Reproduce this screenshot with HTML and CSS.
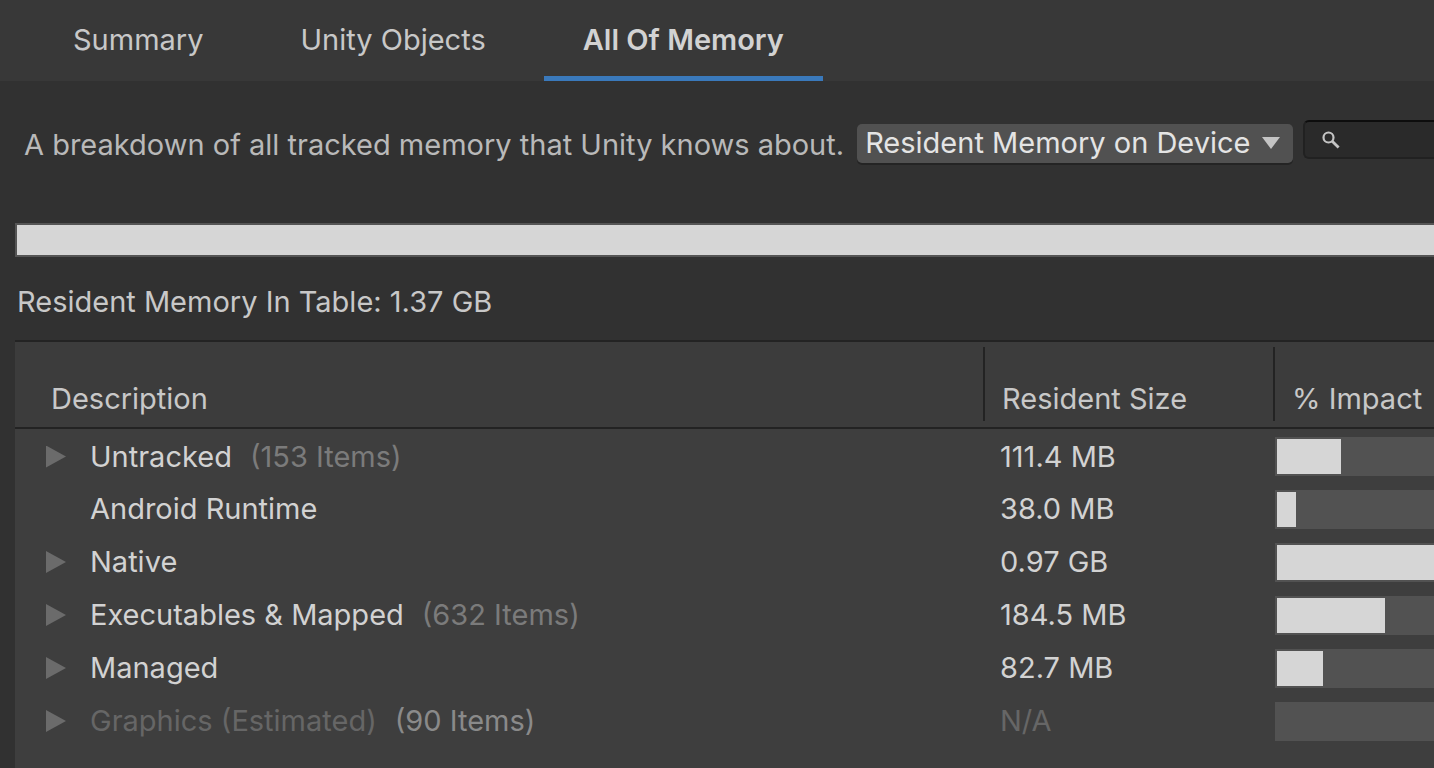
FILE: index.html
```html
<!DOCTYPE html>
<html lang="en">
<head>
    <meta charset="UTF-8">
    <meta name="viewport" content="width=device-width, initial-scale=1.0">
    <title>Memory Profiler</title>
    <link rel="stylesheet" href="styles.css">
</head>
<body>
    <nav class="tabs">
        <button class="tab">Summary</button>
        <button class="tab">Unity Objects</button>
        <button class="tab active">All Of Memory</button>
    </nav>
    <main class="content">
        <div class="toolbar">
            <label class="description" for="view">A breakdown of all tracked memory that Unity knows about.</label>
            <div class="dropdown">
                <select id="view">
                    <option>Resident Memory on Device</option>
                </select>
                <svg class="arrow" width="18" height="12" viewBox="0 0 18 12"><path d="M0 0H18L9 12Z" fill="#c4c4c4"/></svg>
            </div>
            <label class="search">
                <svg width="18" height="18" viewBox="0 0 18 18" fill="none" stroke="#c4c4c4"><circle cx="6.5" cy="6.5" r="5" stroke-width="2.2"/><path d="M10.2 10.2L16.6 16.6" stroke-width="2.8"/></svg>
                <input type="search" aria-label="Search">
            </label>
        </div>
        <div class="total-bar"><div class="fill"></div></div>
        <p class="total">Resident Memory In Table: 1.37 GB</p>
        <table class="memory">
            <colgroup>
                <col>
                <col class="col-size">
                <col class="col-impact">
            </colgroup>
            <thead>
                <tr>
                    <th><div class="heading first">Description</div></th>
                    <th><div class="heading">Resident Size</div></th>
                    <th><div class="heading">% Impact</div></th>
                </tr>
            </thead>
            <tbody>
                <tr>
                    <td><div class="name"><button class="toggle" aria-label="Expand Untracked"></button><span>Untracked</span><span class="count">(153 Items)</span></div></td>
                    <td class="size">111.4 MB</td>
                    <td><div class="bar"><div class="fill" style="width: 41%"></div></div></td>
                </tr>
                <tr>
                    <td><div class="name leaf"><span>Android Runtime</span></div></td>
                    <td class="size">38.0 MB</td>
                    <td><div class="bar"><div class="fill" style="width: 12%"></div></div></td>
                </tr>
                <tr>
                    <td><div class="name"><button class="toggle" aria-label="Expand Native"></button><span>Native</span></div></td>
                    <td class="size">0.97 GB</td>
                    <td><div class="bar"><div class="fill" style="width: 100%"></div></div></td>
                </tr>
                <tr>
                    <td><div class="name"><button class="toggle" aria-label="Expand Executables &amp; Mapped"></button><span>Executables &amp; Mapped</span><span class="count">(632 Items)</span></div></td>
                    <td class="size">184.5 MB</td>
                    <td><div class="bar"><div class="fill" style="width: 69%"></div></div></td>
                </tr>
                <tr>
                    <td><div class="name"><button class="toggle" aria-label="Expand Managed"></button><span>Managed</span></div></td>
                    <td class="size">82.7 MB</td>
                    <td><div class="bar"><div class="fill" style="width: 29%"></div></div></td>
                </tr>
                <tr class="estimated">
                    <td><div class="name"><button class="toggle" aria-label="Expand Graphics"></button><span>Graphics (Estimated)</span><span class="count">(90 Items)</span></div></td>
                    <td class="size">N/A</td>
                    <td><div class="bar"></div></td>
                </tr>
            </tbody>
        </table>
    </main>
</body>
</html>
```

FILE: styles.css
```css
* {
    box-sizing: border-box;
}
body {
    margin: 0;
    min-height: 100vh;
    display: flex;
    flex-direction: column;
    background: #313131;
    color: #c8c8c8;
    font-family: Inter, sans-serif;
    font-size: 29px;
    font-optical-sizing: none;
    line-height: 36px;
}
button, select, input {
    margin: 0;
    border: none;
    background: none;
    color: inherit;
    font: inherit;
    font-optical-sizing: none;
}
.tabs {
    display: flex;
    gap: 19px;
    padding-left: 34px;
    background: #383838;
}
.tab {
    padding: 22px 39px 18px;
    border-bottom: 5px solid transparent;
    cursor: pointer;
}
.tab.active {
    border-bottom-color: #3a79bb;
    color: #d2d2d2;
    font-weight: 600;
}
.content {
    flex: 1;
    display: flex;
    flex-direction: column;
    padding-left: 15px;
}
.toolbar {
    display: flex;
    align-items: flex-start;
    padding: 39px 0 60px 9px;
}
.description {
    flex: none;
    padding: 7px 13px 0 0;
    color: #b9b9b9;
}
.dropdown {
    position: relative;
    flex: none;
    padding-top: 4px;
    margin-right: 10px;
}
.dropdown select {
    display: block;
    height: 39px;
    padding: 0 42px 2px 8px;
    border-radius: 5px;
    background: #515151;
    box-shadow: 0 2px 0 #242424;
    color: #e4e4e4;
    appearance: none;
}
.arrow {
    position: absolute;
    top: 17px;
    right: 13px;
    pointer-events: none;
}
.search {
    flex: 1;
    min-width: 0;
    height: 39px;
    display: flex;
    align-items: center;
    gap: 8px;
    padding-left: 17px;
    border: 2px solid #212121;
    border-top-color: #0d0d0d;
    border-right: none;
    border-radius: 6px 0 0 6px;
    background: #2a2a2a;
}
.search svg {
    flex: none;
}
.search input {
    flex: 1;
    min-width: 0;
    padding: 0;
    outline: none;
}
.total-bar {
    height: 34px;
    padding: 2px 0 2px 2px;
    background: #555555;
}
.fill {
    height: 100%;
    background: #d6d6d6;
}
.total {
    margin: 0;
    padding: 27px 0 20px 2px;
}
.memory {
    width: 100%;
    border-collapse: collapse;
    table-layout: fixed;
    background: #3e3e3e;
}
.col-size {
    width: 290px;
}
.col-impact {
    width: 161px;
}
.memory thead {
    background: #3c3c3c;
    border-top: 2px solid #232323;
    border-bottom: 2px solid #232323;
}
.memory th, .memory td {
    padding: 0;
    text-align: left;
    font-weight: 400;
    white-space: nowrap;
}
.memory th {
    padding: 5px 0 6px;
}
.memory td {
    padding-top: 3px;
}
.heading {
    padding: 34px 0 4px 17px;
    border-left: 2px solid #232323;
}
.heading.first {
    padding-left: 34px;
    border-left-color: transparent;
}
.memory tbody tr {
    height: 53px;
}
/* keeps the table background down to the bottom of the window */
.content::after {
    content: "";
    flex: 1;
    background: #3e3e3e;
}
.name {
    display: flex;
    align-items: center;
    gap: 18px;
    padding-left: 31px;
    color: #d2d2d2;
}
.name.leaf {
    padding-left: 75px;
}
.toggle {
    width: 20px;
    height: 22px;
    margin-right: 6px;
    padding: 0;
    background: #6b6b6b;
    clip-path: polygon(0 0, 100% 50%, 0 100%);
    cursor: pointer;
}
.count {
    color: #7b7b7b;
}
.memory .size {
    padding-left: 17px;
    color: #d2d2d2;
}
.bar {
    height: 39px;
    margin-left: 2px;
    padding: 2px 0 2px 2px;
    background: #525252;
}
.estimated .name, .memory .estimated .size {
    color: #666666;
}
.estimated .count {
    color: #8a8a8a;
}
```
